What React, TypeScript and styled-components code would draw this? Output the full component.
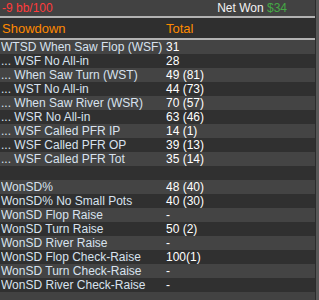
import React from "react";
import styled, { createGlobalStyle } from "styled-components";

const Global = createGlobalStyle`
  html, body {
    margin: 0;
    padding: 0;
    background: #424242;
  }
  body {
    font-family: "Liberation Sans", Arial, sans-serif;
  }
`;

const Frame = styled.div`
  display: flex;
  width: 319px;
  height: 300px;
  overflow: hidden;
  background: #424242;
`;

const Panel = styled.div`
  flex: 1;
  display: flex;
  flex-direction: column;
`;

const Scrollbar = styled.div`
  width: 3px;
  border-left: 1px solid #2c2c2c;
  background: #585858;
`;

const TopBar = styled.div`
  display: flex;
  justify-content: space-between;
  height: 16px;
  line-height: 16px;
  padding: 0 28px 0 2px;
  font-size: 12px;
`;

const BbRate = styled.span`
  color: #ff3b3b;
`;

const NetWon = styled.span`
  color: #f2f2f2;
`;

const Money = styled.span`
  color: #45a845;
`;

const Divider = styled.div`
  height: 2px;
  background: #b2b2b2;
`;

const HeadRow = styled.div`
  display: grid;
  grid-template-columns: 164px 1fr;
  height: 20px;
  line-height: 21px;
  background: #2f2f2f;
  color: #ff8a00;
  font-size: 13px;
  padding-left: 2px;
`;

const Row = styled.div<{ $light: boolean }>`
  display: grid;
  grid-template-columns: 165px 1fr;
  height: 14px;
  line-height: 14px;
  font-size: 12px;
  padding-left: 1px;
  background: ${({ $light }) => ($light ? "#444444" : "#303030")};
  white-space: nowrap;
`;

const Label = styled.span`
  color: #d8e2ee;
  overflow: hidden;
`;

const Value = styled.span`
  color: #ffffff;
`;

const rows: [string, string][] = [
  ["WTSD When Saw Flop (WSF)", "31"],
  ["... WSF No All-in", "28"],
  ["... When Saw Turn (WST)", "49 (81)"],
  ["... WST No All-in", "44 (73)"],
  ["... When Saw River (WSR)", "70 (57)"],
  ["... WSR No All-in", "63 (46)"],
  ["... WSF Called PFR IP", "14 (1)"],
  ["... WSF Called PFR OP", "39 (13)"],
  ["... WSF Called PFR Tot", "35 (14)"],
  ["", ""],
  ["WonSD%", "48 (40)"],
  ["WonSD% No Small Pots", "40 (30)"],
  ["WonSD Flop Raise", "-"],
  ["WonSD Turn Raise", "50 (2)"],
  ["WonSD River Raise", "-"],
  ["WonSD Flop Check-Raise", "100(1)"],
  ["WonSD Turn Check-Raise", "-"],
  ["WonSD River Check-Raise", "-"],
];

export default function App() {
  return (
    <Frame>
      <Global />
      <Panel>
        <TopBar>
          <BbRate>-9 bb/100</BbRate>
          <NetWon>
            Net Won <Money>$34</Money>
          </NetWon>
        </TopBar>
        <Divider />
        <HeadRow>
          <span>Showdown</span>
          <span>Total</span>
        </HeadRow>
        <Divider />
        {rows.map(([label, value], i) => (
          <Row key={i} $light={i % 2 === 0}>
            <Label>{label}</Label>
            <Value>{value}</Value>
          </Row>
        ))}
      </Panel>
      <Scrollbar />
    </Frame>
  );
}
